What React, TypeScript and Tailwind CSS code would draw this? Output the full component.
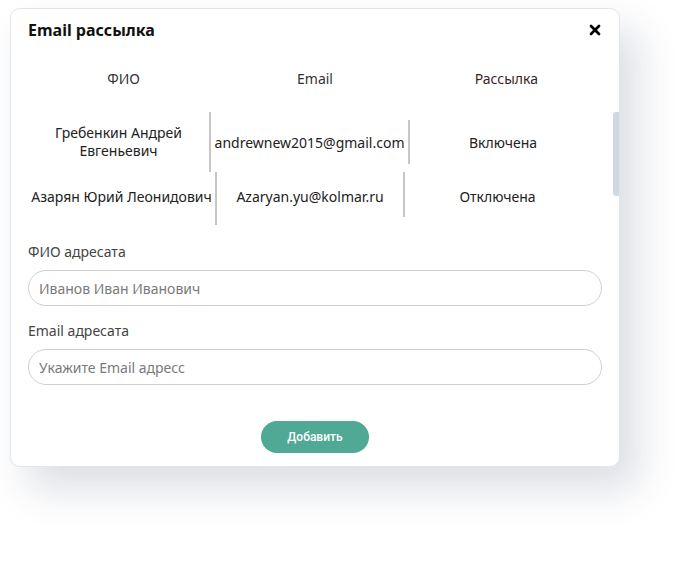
import { X } from 'lucide-react';

const font = { fontFamily: '"Noto Sans", "Open Sans", sans-serif' };

export default function App() {
  return (
    <div className="w-[699px] h-[571px] bg-white pt-[8px] pl-[10px]" style={font}>
      <div className="relative w-[610px] h-[459px] rounded-[10px] border border-[#dfe6ee] bg-white shadow-[18px_22px_40px_rgba(40,50,90,0.16)] overflow-hidden">
        {/* header */}
        <div className="flex items-center justify-between pl-[17px] pr-[16px] h-[42px]">
          <h2 className="text-[16px] font-bold text-[#111]">Email рассылка</h2>
          <X className="w-[16px] h-[16px] text-black" strokeWidth={4} />
        </div>

        {/* table */}
        <div className="px-[17px]">
          <div className="grid grid-cols-3 h-[50px] items-center text-[14px] text-[#333] mt-[2px]">
            <div className="text-center">ФИО</div>
            <div className="text-center">Email</div>
            <div className="text-center text-[#3a1f24]">Рассылка</div>
          </div>

          <div className="flex items-center h-[60px] mt-[9px] text-[14px] text-[#222]">
            <div className="w-[183px] h-[60px] flex flex-col items-center justify-center text-center leading-[18px] border-r-2 border-[#c6c6c6]">
              <span>Гребенкин Андрей</span>
              <span>Евгеньевич</span>
            </div>
            <div className="w-[199px] h-[44px] flex items-center justify-center border-r-2 border-[#c6c6c6] whitespace-nowrap">
              andrewnew2015@gmail.com
            </div>
            <div className="flex-1 text-center pr-[6px]">Включена</div>
          </div>

          <div className="flex items-start h-[54px] text-[14px] text-[#222]">
            <div className="w-[189px] h-[53px] flex items-center justify-center pb-[5px] border-r-2 border-[#c6c6c6] whitespace-nowrap">
              Азарян Юрий Леонидович
            </div>
            <div className="w-[188px] h-[45px] flex items-center justify-center pt-[3px] border-r-2 border-[#c6c6c6] whitespace-nowrap">
              Azaryan.yu@kolmar.ru
            </div>
            <div className="flex-1 text-center pr-[12px] h-[49px] flex items-center justify-center">Отключена</div>
          </div>
        </div>

        {/* form */}
        <div className="px-[17px] mt-[16px]">
          <label className="block text-[14px] text-[#444] leading-[20px]">ФИО адресата</label>
          <input
            className="mt-[8px] w-full h-[36px] rounded-full border border-[#cfcfcf] px-[10px] text-[14px] placeholder:text-[#7a7a7a] outline-none"
            placeholder="Иванов Иван Иванович"
          />
          <label className="block mt-[15px] text-[14px] text-[#444] leading-[20px]">Email адресата</label>
          <input
            className="mt-[8px] w-full h-[36px] rounded-full border border-[#cfcfcf] px-[10px] text-[14px] placeholder:text-[#7a7a7a] outline-none"
            placeholder="Укажите Email адресс"
          />
          <div className="flex justify-center mt-[36px]">
            <button
              className="w-[108px] h-[32px] rounded-full bg-[#4fa994] text-white text-[12px] font-medium"
              style={{ fontFamily: 'Roboto, sans-serif' }}
            >
              Добавить
            </button>
          </div>
        </div>

        {/* scrollbar thumb */}
        <div className="absolute right-[0px] top-[103px] w-[6px] h-[84px] rounded-l-[3px] bg-[#cfd9e2]" />
      </div>
    </div>
  );
}
